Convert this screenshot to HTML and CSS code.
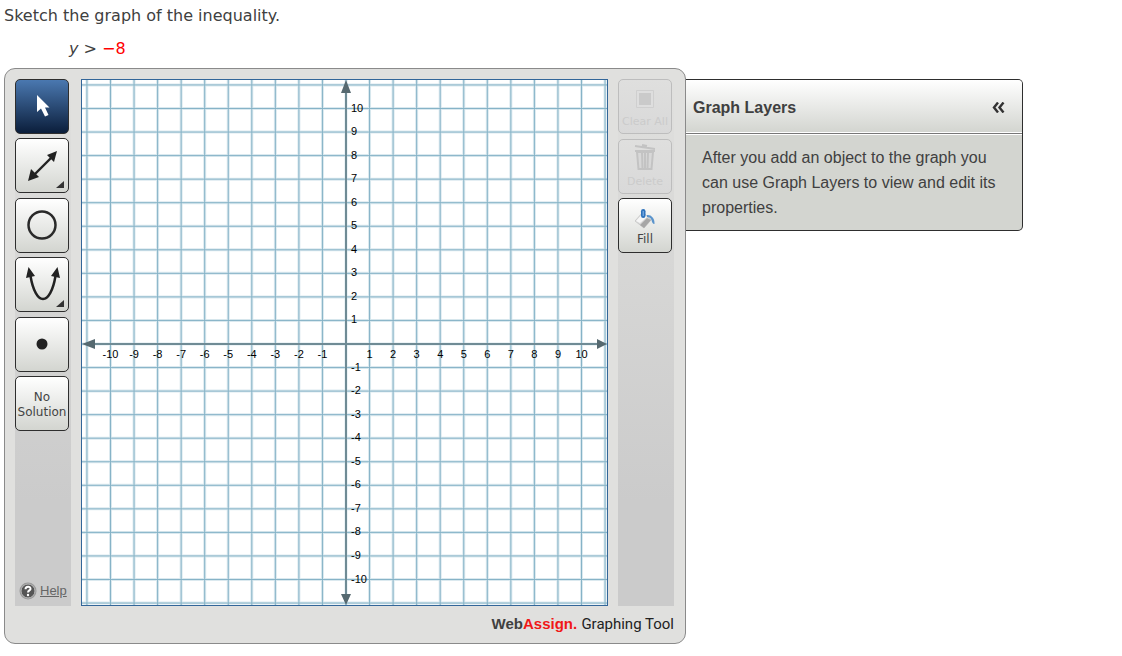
FILE: index.html
```html
<!DOCTYPE html>
<html lang="en">
<head>
  <meta charset="UTF-8">
  <meta name="viewport" content="width=device-width, initial-scale=1.0">
  <title>Graphing Tool</title>
  <link rel="stylesheet" href="styles.css">
</head>
<body>

  <p class="question">Sketch the graph of the inequality.</p>
  <p class="inequality"><i>y</i> &gt; <span class="value">−8</span></p>

  <div class="workspace">
    <div class="graph-tool">
      <div class="tool-row">
        <div class="toolbar">
          <div class="tools tools-draw">
            <button type="button" class="tool active" aria-label="Select">
              <svg width="52" height="52" viewBox="0 0 52 52"><path d="M21 14v17l4-3.500 4 8 3.500-1.500-3.500-7.500h4.500z" fill="#fff"/></svg>
            </button>
            <button type="button" class="tool" aria-label="Line">
              <svg width="52" height="52" viewBox="0 0 52 52">
                <path d="M18 35L36 17" stroke="#222" stroke-width="2.400"/>
                <path d="M41 11l-3 11-7-7zM12 41l3-12 8 8z" fill="#222"/>
                <path d="M48 41v7h-8z" fill="#333"/>
              </svg>
            </button>
            <button type="button" class="tool" aria-label="Circle">
              <svg width="52" height="52" viewBox="0 0 52 52"><circle cx="26" cy="26" r="13.500" fill="none" stroke="#2a2a2a" stroke-width="2.500"/></svg>
            </button>
            <button type="button" class="tool" aria-label="Parabola">
              <svg width="52" height="52" viewBox="0 0 52 52">
                <path d="M14.500 17C17 32 22 40 27 40S37 32 39.500 17" fill="none" stroke="#222" stroke-width="2.500"/>
                <path d="M12.500 8l6.500 9-9 2zM41.500 8l2.500 11-9-2z" fill="#222"/>
                <path d="M48 41v7h-8z" fill="#333"/>
              </svg>
            </button>
            <button type="button" class="tool" aria-label="Point">
              <svg width="52" height="52" viewBox="0 0 52 52"><circle cx="26" cy="26" r="5.500" fill="#222"/></svg>
            </button>
            <button type="button" class="tool tool-text">No<br>Solution</button>
          </div>
          <a class="help" href="#">
            <svg width="18" height="18" viewBox="0 0 18 18">
              <circle cx="9" cy="9" r="8.500" fill="#999"/>
              <circle cx="9" cy="9" r="7" fill="#555" stroke="#bbb"/>
              <path d="M6.500 7.200C6.500 3.800 11.800 4 11.500 7C11.300 8.500 9 8.500 9 10.500" fill="none" stroke="#fff" stroke-width="2"/>
              <circle cx="9" cy="13" r="1.200" fill="#fff"/>
            </svg>
            <span>Help</span>
          </a>
        </div>

        <svg class="graph" id="graph" viewBox="0 0 525 525" role="img" aria-label="Coordinate plane"></svg>

        <div class="toolbar">
          <div class="tools tools-edit">
            <button type="button" class="tool" disabled>
              <svg width="18" height="21" viewBox="0 0 18 21"><path d="M.5.5h17v17H.5z" fill="#dedede" stroke="#cfcfcf"/><path d="M3 3h12v12H3z" fill="#cacaca"/></svg>
              <span>Clear All</span>
            </button>
            <button type="button" class="tool" disabled>
              <svg width="22" height="27" viewBox="0 0 22 27">
                <path d="M1 2l20 3M8 1l5 1" stroke="#c3c3c3" stroke-width="2"/>
                <path d="M3 8h16l-1.500 17h-13z" fill="#d8d8d8" stroke="#c3c3c3" stroke-width="2"/>
                <path d="M1 7h20M8 8l.5 16M11 8v16M14 8l-.5 16" stroke="#c3c3c3" stroke-width="2"/>
              </svg>
              <span>Delete</span>
            </button>
            <button type="button" class="tool">
              <svg width="20" height="20" viewBox="0 0 20 20">
                <path d="M8 3l8 8-7 8-9-7z" fill="#d9d9d9" stroke="#bbb" stroke-width=".6"/>
                <path d="M16 11l-7 8-4-3 7-7z" fill="#a6a6a6"/>
                <path d="M8 4l4 4-7 6-4-2z" fill="#f6f6f6"/>
                <path d="M12 6c4-.5 8 3 7.500 9-2 0-2.500-2-3-4-.5-2-2.500-3-4.500-3z" fill="#5b94cc"/>
                <rect x="6" y="0" width="4.500" height="9" rx="2.200" fill="#2f73bd"/>
                <path d="M8.200 2v5" stroke="#8dbcec"/>
              </svg>
              <span>Fill</span>
            </button>
          </div>
        </div>
      </div>
      <div class="brand"><b>Web<span class="brand-red">Assign.</span></b> <span class="brand-tool">Graphing Tool</span></div>
    </div>

    <section class="layers">
      <div class="layers-header">
        <h2>Graph Layers</h2>
        <button type="button" class="collapse" aria-label="Collapse">
          <svg width="13" height="11" viewBox="0 0 13 11"><path d="M6 .5L2 5.500l4 5M11.500 .5l-4 5 4 5" fill="none" stroke="#333" stroke-width="2.400"/></svg>
        </button>
      </div>
      <p class="layers-text">After you add an object to the graph you can use Graph Layers to view and edit its properties.</p>
    </section>
  </div>

  <script src="graph.js"></script>
</body>
</html>
```
FILE: styles.css
```css
* {
  box-sizing: border-box;
}

body {
  margin: 0;
  padding: 5px 4px;
  background: #fff;
  color: #404040;
  font-family: Verdana, "DejaVu Sans", sans-serif;
  font-size: 16px;
}

p {
  margin: 0;
}

.question {
  line-height: 22px;
}

.inequality {
  line-height: 22px;
  padding: 11px 0 8px 65px;
}

.value {
  color: #f00;
}

.workspace {
  display: flex;
  align-items: flex-start;
}

.graph-tool {
  flex: 0 1 682px;
  padding: 10px 11px 9px 10px;
  background: #e0e0de;
  border: 1px solid #8a8a8a;
  border-radius: 11px;
}

.tool-row {
  display: flex;
  gap: 10px;
}

.toolbar {
  flex: 0 0 56px;
  display: flex;
  flex-direction: column;
  justify-content: space-between;
  background: linear-gradient(#e0e0de, #cbcbcb 80%);
}

.tools {
  display: flex;
  flex-direction: column;
  justify-content: space-between;
}

.tools-draw {
  height: 352px;
}

.tools-edit {
  height: 174px;
}

.tool {
  width: 54px;
  height: 55px;
  padding: 0;
  display: flex;
  flex-direction: column;
  align-items: center;
  justify-content: center;
  background: linear-gradient(#fff, #d3d5d0);
  border: 1px solid #2e2e2e;
  border-radius: 5px;
  color: #444;
  font-family: "DejaVu Sans", sans-serif;
  font-size: 12px;
  line-height: 15px;
  white-space: nowrap;
  overflow: hidden;
  cursor: pointer;
}

.tool.active {
  background: linear-gradient(#4a78b0, #0b1e3b);
}

.tools-draw .tool {
  display: block;
}

.tools-draw .tool-text {
  padding-top: 3px;
}

.tools-edit .tool {
  justify-content: flex-end;
  gap: 3px;
  padding-bottom: 5px;
}

.tool:disabled {
  background: linear-gradient(#dfdfde, #d9d9d9);
  border-color: #bdbdbd;
  color: #cbcbcb;
  font-size: 11px;
  cursor: default;
}

.tool svg {
  display: block;
  flex: none;
}

.tools-edit .tool:disabled {
  padding-bottom: 4px;
}

.help {
  display: flex;
  align-items: center;
  gap: 3px;
  padding: 0 0 5px 4px;
  color: #666;
  font-family: Arial, "Liberation Sans", sans-serif;
  font-size: 13px;
  line-height: 20px;
}

.graph {
  flex: 1 1 0;
  min-width: 0;
  align-self: flex-start;
  background: #fff;
  border: 1px solid #336699;
}

.grid-halo {
  stroke: #dbe9ef;
  stroke-width: 3;
}

.grid-line {
  stroke: #86b3c7;
  stroke-width: 1;
}

.axis {
  stroke: #6f8b95;
  stroke-width: 2;
}

.arrow {
  fill: #566970;
}

.label {
  fill: #000;
  font-family: Arial, "Liberation Sans", sans-serif;
  font-size: 11px;
}

.label-x {
  text-anchor: middle;
}

.brand {
  padding-top: 8px;
  text-align: right;
  font-family: Arial, "Liberation Sans", sans-serif;
  font-size: 15px;
  line-height: 20px;
}

.brand-red {
  color: #f01818;
}

.brand-tool {
  color: #222;
  font-family: Roboto, sans-serif;
}

.layers {
  flex: 0 1 337px;
  margin-top: 11px;
  background: #d3d5d0;
  border: 1px solid #2e2e2e;
  border-left: 0;
  border-radius: 0 5px 5px 0;
  font-family: Arial, "Liberation Sans", sans-serif;
  overflow: hidden;
}

.layers-header {
  display: flex;
  align-items: center;
  justify-content: space-between;
  height: 53px;
  padding: 3px 17px 0 7px;
  background: linear-gradient(#fff, #d3d5d0);
  border-bottom: 1px solid #fff;
}

.layers-header h2 {
  margin: 0;
  font-size: 16px;
}

.collapse {
  padding: 0;
  background: none;
  border: 0;
  cursor: pointer;
}

.collapse svg {
  display: block;
}

.layers-text {
  padding: 11px 16px 10px;
  border-top: 1px solid #777;
  box-shadow: inset 0 1px #fff;
  line-height: 25px;
}
```
FILE: graph.js
```js
const graph = document.getElementById('graph');
const center = 264;
const step = 23.55;

function add(tag, attrs, text) {
  const el = document.createElementNS('http://www.w3.org/2000/svg', tag);
  for (const name in attrs) el.setAttribute(name, attrs[name]);
  if (text !== undefined) el.textContent = text;
  graph.appendChild(el);
}

function line(x1, y1, x2, y2, cls) {
  add('line', { x1, y1, x2, y2, class: cls });
}

// grid, one soft line under one thin line
for (const cls of ['grid-halo', 'grid-line']) {
  for (let i = -11; i <= 11; i++) {
    const p = center + i * step;
    line(p, 0, p, 525, cls);
    line(0, p, 525, p, cls);
  }
}

// axes
line(center, 10, center, 515, 'axis');
line(10, center, 515, center, 'axis');
add('path', { class: 'arrow', d: 'M264 0l5 13h-10zM264 525l5-11h-10zM0 264l13-5v10zM525 264l-10-5v10z' });

// numbers
for (let i = -10; i <= 10; i++) {
  if (i === 0) continue;
  add('text', { x: center + i * step, y: 278, class: 'label label-x' }, i);
  add('text', { x: 269, y: center - i * step + 3, class: 'label' }, i);
}
```
